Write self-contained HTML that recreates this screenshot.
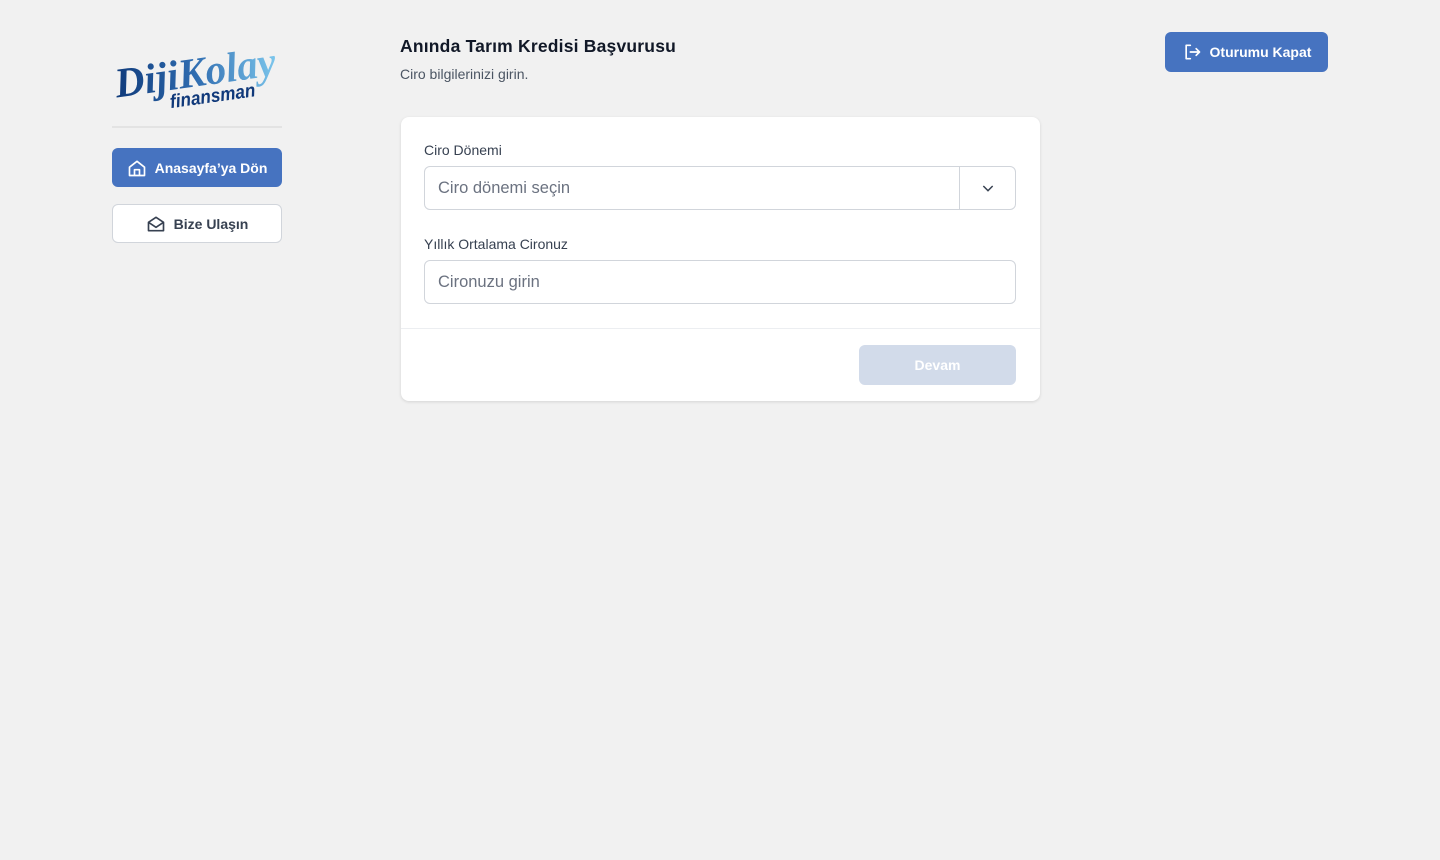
<!DOCTYPE html>
<html><head><meta charset="utf-8"><style>
*{box-sizing:border-box;margin:0;padding:0}
body{width:1440px;height:860px;background:#f1f1f1;font-family:"Liberation Sans",sans-serif;position:relative;overflow:hidden;color:#111827}
.btn{position:absolute;display:flex;align-items:center;justify-content:center;gap:8px;border-radius:6px;font-size:14px;font-weight:bold}
.blue{background:#4673c0;color:#fff}
.white{background:#fff;color:#374151;border:1px solid #d1d5db}
.card{position:absolute;left:401px;top:117px;width:639px;height:284px;background:#fff;border-radius:8px;box-shadow:0 1px 3px rgba(0,0,0,.12)}
label{position:absolute;left:23px;font-size:14px;color:#374151}
.inp{position:absolute;left:23px;width:592px;height:44px;border:1px solid #d1d5db;border-radius:6px;font-size:16.5px;color:#6b7280;padding:0 13px;display:flex;align-items:center}
</style></head><body>
<svg style="position:absolute;left:108px;top:26px" width="180" height="84" viewBox="0 0 180 84">
<defs><linearGradient id="g" x1="0" x2="1"><stop offset="0" stop-color="#0f3a7a"/><stop offset=".5" stop-color="#2f6cb0"/><stop offset="1" stop-color="#7cc6ec"/></linearGradient></defs>
<g transform="rotate(-8 90 45)">
<text x="6" y="60" font-family="Liberation Serif" font-style="italic" font-weight="bold" font-size="42" fill="url(#g)" textLength="162" lengthAdjust="spacingAndGlyphs">DijiKolay</text>
<text x="58" y="78" font-family="Liberation Sans" font-style="italic" font-weight="bold" font-size="19" fill="#10397a" textLength="86" lengthAdjust="spacingAndGlyphs">finansman</text>
</g>
</svg>
<div style="position:absolute;left:112px;top:126px;width:170px;height:2px;background:#e3e3e3"></div>
<div class="btn blue" style="left:112px;top:148px;width:170px;height:39px">
<svg width="20" height="20" viewBox="0 0 24 24" fill="none" stroke="#fff" stroke-width="2" stroke-linejoin="round"><path d="M3 11l9-7 9 7v10H3z"/><path d="M9 21v-7h6v7"/></svg>Anasayfa’ya Dön</div>
<div class="btn white" style="left:112px;top:204px;width:170px;height:39px">
<svg width="20" height="20" viewBox="0 0 24 24" fill="none" stroke="#374151" stroke-width="2" stroke-linejoin="round"><path d="M3 10l9-6 9 6v10H3z"/><path d="M3 10l9 6 9-6"/></svg>Bize Ulaşın</div>
<div style="position:absolute;left:400px;top:36px;font-size:17.5px;font-weight:bold;color:#111827;letter-spacing:.2px">Anında Tarım Kredisi Başvurusu</div>
<div style="position:absolute;left:400px;top:66px;font-size:14px;color:#4b5563">Ciro bilgilerinizi girin.</div>
<div class="btn blue" style="left:1165px;top:32px;width:163px;height:40px">
<svg width="20" height="20" viewBox="0 0 24 24" fill="none" stroke="#fff" stroke-width="2" stroke-linecap="round" stroke-linejoin="round"><path d="M10 4H5v16h5"/><path d="M10 12h11M17 8l4 4-4 4"/></svg>Oturumu Kapat</div>
<div class="card">
<label style="top:25px">Ciro Dönemi</label>
<div class="inp" style="top:49px">Ciro dönemi seçin
<div style="position:absolute;right:0;top:0;width:56px;height:42px;border-left:1px solid #d1d5db;display:flex;align-items:center;justify-content:center"><svg width="16" height="16" viewBox="0 0 24 24" fill="none" stroke="#374151" stroke-width="2.2"><path d="M5 9l7 7 7-7"/></svg></div></div>
<label style="top:119px">Yıllık Ortalama Cironuz</label>
<div class="inp" style="top:143px">Cironuzu girin</div>
<div style="position:absolute;left:0;right:0;top:211px;border-top:1px solid #eceef1"></div>
<div class="btn" style="left:458px;top:228px;width:157px;height:40px;background:#d2dbea;color:#fff">Devam</div>
</div>
</body></html>
